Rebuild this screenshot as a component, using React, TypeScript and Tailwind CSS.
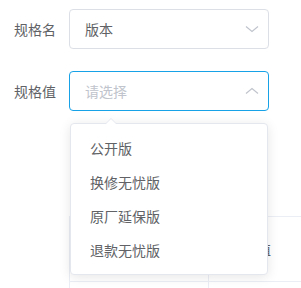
const font = { fontFamily: '"Noto Sans CJK SC", "Noto Sans", sans-serif' };

const ChevronDown = () => (
  <svg width="14" height="8" viewBox="0 0 14 8" fill="none" stroke="#c0c4cc" strokeWidth="1.2">
    <path d="M1 1.5 L7 6.5 L13 1.5" />
  </svg>
);

const ChevronUp = () => (
  <svg width="14" height="8" viewBox="0 0 14 8" fill="none" stroke="#c0c4cc" strokeWidth="1.2">
    <path d="M1 6.5 L7 1.5 L13 6.5" />
  </svg>
);

const options = ["公开版", "换修无忧版", "原厂延保版", "退款无忧版"];

export default function App() {
  return (
    <div className="relative w-[301px] h-[288px] overflow-hidden bg-white text-[14px] text-[#606266]" style={font}>
      <div className="pt-[9px]">
        <div className="flex items-center h-10">
          <div className="w-[69px] pl-[14px]">规格名</div>
          <div className="flex items-center justify-between w-[200px] h-10 pl-[15px] pr-[9px] border border-[#dcdfe6] rounded">
            <span>版本</span>
            <ChevronDown />
          </div>
        </div>
        <div className="flex items-center h-10 mt-[22px]">
          <div className="w-[69px] pl-[14px]">规格值</div>
          <div className="flex items-center justify-between w-[200px] h-10 pl-[15px] pr-[9px] border border-[#17a2e8] rounded">
            <span className="text-[#c0c4cc]">请选择</span>
            <ChevronUp />
          </div>
        </div>

        <div className="ml-[69px] mt-[105px] border-t border-l border-[#ebeef5]">
          <div className="flex h-[65px] border-b border-[#ebeef5]">
            <div className="w-[139px] border-r border-[#ebeef5]" />
            <div className="flex items-center pl-[20px]">规格值</div>
          </div>
          <div className="flex h-10">
            <div className="w-[139px] border-r border-[#ebeef5]" />
          </div>
        </div>
      </div>

      <div className="absolute left-[70px] top-[123px] w-[198px] py-[7px] bg-white border border-[#e4e7ed] rounded shadow-[0_2px_12px_0_rgba(0,0,0,0.1)]">
        <div className="absolute -top-[6px] left-[34px] w-0 h-0 border-x-[6px] border-x-transparent border-b-[6px] border-b-[#e4e7ed]" />
        <div className="absolute -top-[5px] left-[34px] w-0 h-0 border-x-[6px] border-x-transparent border-b-[6px] border-b-white" />
        {options.map((o) => (
          <div key={o} className="h-[34px] flex items-center pl-[19px]">
            {o}
          </div>
        ))}
      </div>
    </div>
  );
}
